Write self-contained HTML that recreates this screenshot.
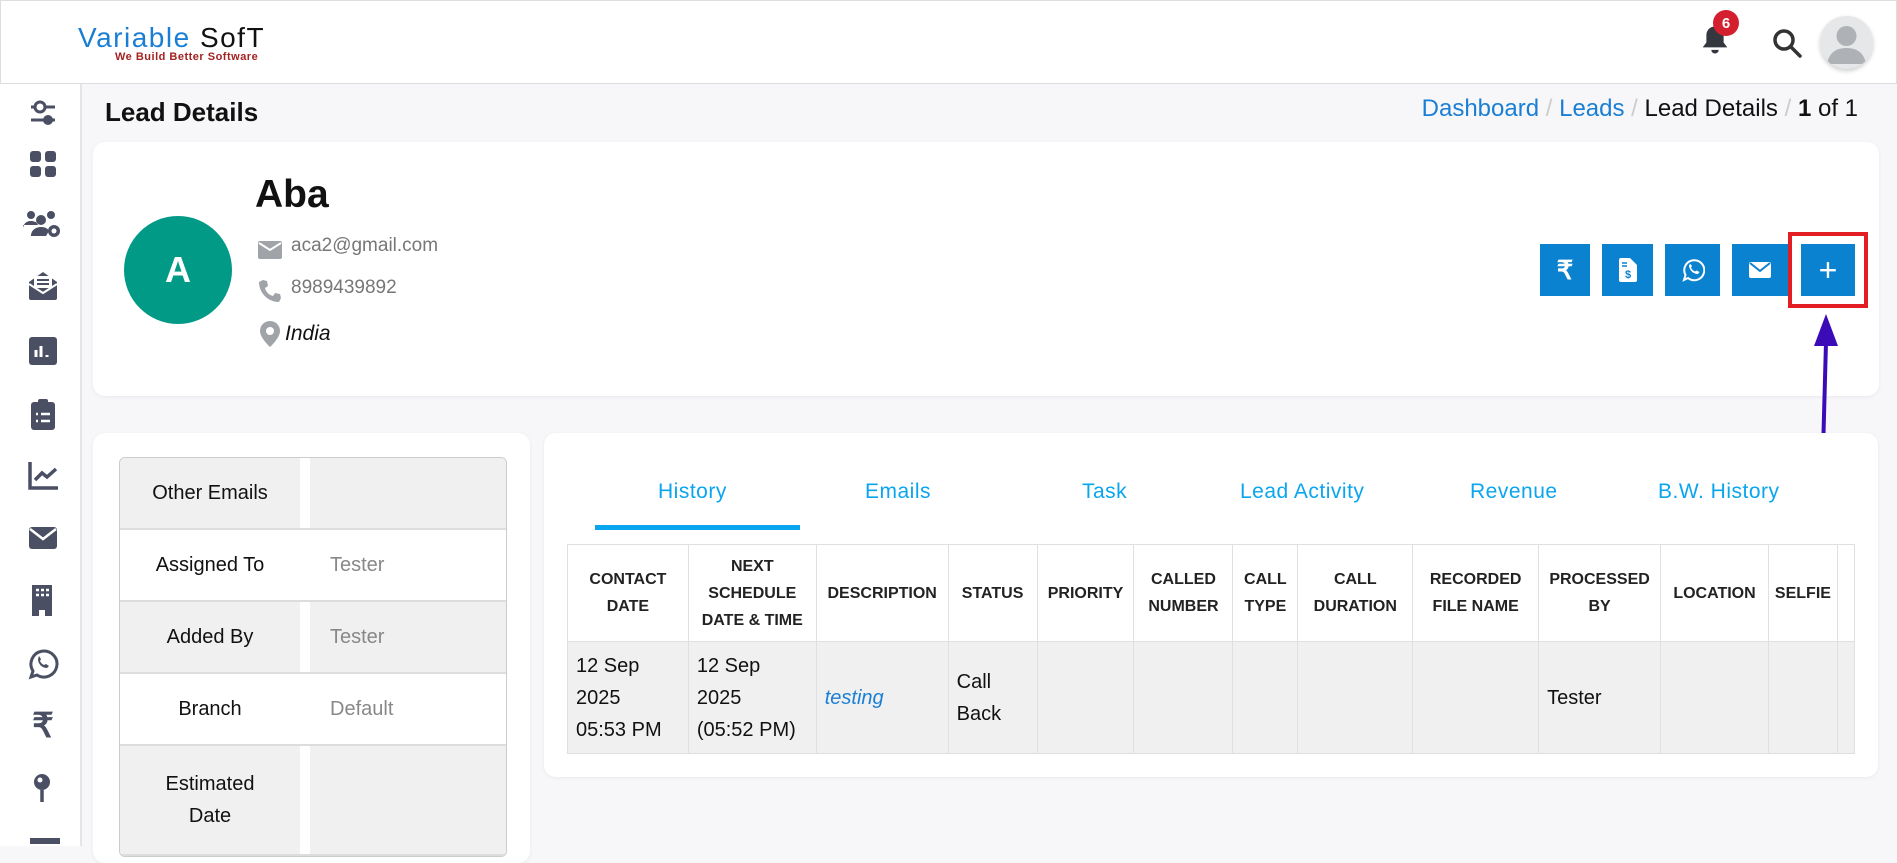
<!DOCTYPE html>
<html><head><meta charset="utf-8"><style>
*{box-sizing:border-box;margin:0;padding:0}
body{width:1897px;height:846px;overflow:hidden;background:#f7f7f9;font-family:"Liberation Sans",sans-serif;position:relative}
.abs{position:absolute}
.hdr{left:0;top:0;width:1897px;height:84px;background:#fff;border:1px solid #ddd}
.side{left:0;top:84px;width:82px;height:762px;background:#fff;border-right:2px solid #e5e5e5}
.ic{position:absolute;left:22px;width:42px;height:32px;display:flex;align-items:center;justify-content:center}
.card{background:#fff;border-radius:12px;box-shadow:0 1px 4px rgba(0,0,0,.06)}
.btn{position:absolute;top:244px;height:52px;background:#0b82cf;display:flex;align-items:center;justify-content:center;color:#fff}
.kv{position:absolute;left:119px;width:388px;border:1px solid #ccc;border-radius:6px;overflow:hidden}
.kv .r{display:flex;height:72px;border-bottom:2px solid #ddd}
.kv .k{width:190px;display:flex;align-items:center;justify-content:center;text-align:center;font-size:20px;color:#111;border-right:10px solid #fff;line-height:32px}
.kv .v{flex:1;display:flex;align-items:center;padding-left:20px;font-size:20px;color:#888}
.kv .g{background:#f0f0f0}
.tab{position:absolute;top:480px;font-size:21px;color:#0aa5ef;letter-spacing:.5px}
table{position:absolute;left:567px;top:544px;border-collapse:collapse;width:1288px}
th{font-size:16px;font-weight:bold;color:#222;height:97px;border:1px solid #dfe0e3;text-align:center;line-height:27px;padding:0 4px}
td{font-size:20px;color:#111;height:112px;background:#f0f0f0;border:1px solid #dfe0e3;line-height:32px;padding:0 8px;vertical-align:middle}
</style></head><body>
<div class="abs hdr"></div>
<div class="abs" style="left:78px;top:22px;font-size:28px;letter-spacing:1.5px;color:#1a7fd4">Variable <span style="color:#111">SofT</span></div>
<div class="abs" style="left:115px;top:51px;font-size:11px;letter-spacing:.5px;color:#a32222;font-weight:bold">We Build Better Software</div>
<!-- bell -->
<svg class="abs" style="left:1700px;top:24px" width="30" height="32" viewBox="0 0 24 26"><path d="M12 2c-4 0-7 3-7 7v6l-3 4h20l-3-4V9c0-4-3-7-7-7z" fill="#34373d"/><path d="M9 21a3 3 0 006 0z" fill="#34373d"/></svg>
<div class="abs" style="left:1713px;top:10px;width:26px;height:26px;border-radius:50%;background:#d41f2e;color:#fff;font-size:15px;font-weight:bold;display:flex;align-items:center;justify-content:center">6</div>
<svg class="abs" style="left:1771px;top:27px" width="32" height="32" viewBox="0 0 32 32"><circle cx="13" cy="13" r="9" fill="none" stroke="#333" stroke-width="3.5"/><path d="M20 20l9 9" stroke="#333" stroke-width="3.5" stroke-linecap="round"/></svg>
<div class="abs" style="left:1820px;top:16px;width:53px;height:53px;border-radius:50%;background:#e6e7e9;box-shadow:0 2px 5px rgba(0,0,0,.2);overflow:hidden"><svg width="53" height="53" viewBox="0 0 53 53"><circle cx="26.5" cy="20" r="10" fill="#aeb2b6"/><path d="M7 48c2-12 10-16 19.5-16S44 36 46 48z" fill="#aeb2b6"/></svg></div>

<div class="abs side">
<svg class="ic" style="top:14px" viewBox="0 0 42 32"><path d="M9 9h24M9 22h24" stroke="#4a4f63" stroke-width="3"/><circle cx="18" cy="9" r="5" fill="#fff" stroke="#4a4f63" stroke-width="3"/><circle cx="26" cy="22" r="5" fill="#4a4f63"/></svg>
<svg class="ic" style="top:64px" viewBox="0 0 42 32"><rect x="8" y="3" width="11" height="11" rx="3" fill="#4a4f63"/><rect x="23" y="3" width="11" height="11" rx="3" fill="#4a4f63"/><rect x="8" y="18" width="11" height="11" rx="3" fill="#4a4f63"/><rect x="23" y="18" width="11" height="11" rx="3" fill="#4a4f63"/></svg>
<svg class="ic" style="top:124px" viewBox="0 0 42 32"><circle cx="9" cy="7" r="4" fill="#4a4f63"/><circle cx="29" cy="7" r="4" fill="#4a4f63"/><circle cx="19" cy="12" r="5" fill="#4a4f63"/><path d="M1 20c1-6 5-7 8-7s6 1 7 4H1zM9 28c0-6 5-9 10-9s7 2 8 4l-3 5z" fill="#4a4f63"/><circle cx="32" cy="23" r="6" fill="#4a4f63"/><circle cx="32" cy="23" r="2.5" fill="#fff"/></svg>
<svg class="ic" style="top:186px" viewBox="0 0 42 32"><path d="M7 12l14-10 14 10v16a2 2 0 01-2 2H9a2 2 0 01-2-2z" fill="#4a4f63"/><rect x="12" y="6" width="18" height="12" fill="#fff"/><path d="M15 10h12M15 14h12" stroke="#4a4f63" stroke-width="2"/><path d="M7 14l14 9 14-9" stroke="#fff" stroke-width="2" fill="none"/></svg>
<svg class="ic" style="top:251px" viewBox="0 0 42 32"><rect x="7" y="2" width="28" height="28" rx="3" fill="#4a4f63"/><path d="M14 22v-7M19 22V11M25 22v-2" stroke="#fff" stroke-width="3"/></svg>
<svg class="ic" style="top:314px" viewBox="0 0 42 32"><rect x="9" y="4" width="24" height="28" rx="3" fill="#4a4f63"/><rect x="16" y="1" width="10" height="6" rx="2" fill="#4a4f63"/><path d="M14 16h2M19 16h9M14 23h2M19 23h9" stroke="#fff" stroke-width="2.5"/></svg>
<svg class="ic" style="top:375px" viewBox="0 0 42 32"><path d="M8 3v26h28" stroke="#4a4f63" stroke-width="3.5" fill="none"/><path d="M13 21l7-7 5 4 9-8" stroke="#4a4f63" stroke-width="3.5" fill="none"/></svg>
<svg class="ic" style="top:438px" viewBox="0 0 42 32"><rect x="7" y="5" width="28" height="22" rx="3" fill="#4a4f63"/><path d="M8 7l13 10 13-10" stroke="#fff" stroke-width="2.5" fill="none"/></svg>
<svg class="ic" style="top:500px" viewBox="0 0 42 32"><path d="M10 1h20v31h-7v-6h-6v6h-7z" fill="#4a4f63"/><path d="M14 6h3M19 6h3M24 6h3M14 11h3M19 11h3M24 11h3" stroke="#fff" stroke-width="2.5"/></svg>
<svg class="ic" style="top:564px" viewBox="0 0 42 32"><path d="M9 29l2-6a13 13 0 114 4z" fill="none" stroke="#4a4f63" stroke-width="3"/><path d="M16 11c0 5 4 9 9 9l2-2-3-2-2 1c-2-1-3-2-4-4l1-2-2-3z" fill="#4a4f63"/></svg>
<div class="ic" style="top:626px;font-size:34px;font-weight:bold;color:#4a4f63">₹</div>
<svg class="ic" style="top:688px" viewBox="0 0 42 32"><circle cx="20" cy="10" r="8" fill="#4a4f63"/><circle cx="18" cy="8" r="2.5" fill="#fff"/><path d="M20 18v12" stroke="#4a4f63" stroke-width="3.5"/></svg>
<div class="ic" style="top:752px;height:10px"><div style="width:30px;height:6px;background:#4a4f63;margin-left:4px"></div></div>
</div>

<div class="abs" style="left:105px;top:97px;font-size:26px;font-weight:bold;color:#111">Lead Details</div>
<div class="abs" style="right:39px;top:95px;font-size:24px;color:#111;white-space:nowrap"><span style="color:#1a7fd4">Dashboard</span> <span style="color:#ccc">/</span> <span style="color:#1a7fd4">Leads</span> <span style="color:#ccc">/</span> Lead Details <span style="color:#ccc">/</span> <b>1</b> of 1</div>

<div class="abs card" style="left:93px;top:142px;width:1786px;height:254px"></div>
<div class="abs" style="left:124px;top:216px;width:108px;height:108px;border-radius:50%;background:#019a86;color:#fff;font-size:36px;font-weight:bold;display:flex;align-items:center;justify-content:center">A</div>
<div class="abs" style="left:255px;top:173px;font-size:39px;font-weight:bold;color:#111">Aba</div>
<svg class="abs" style="left:258px;top:241px" width="24" height="18" viewBox="0 0 24 18"><rect width="24" height="18" rx="2" fill="#a0a3a8"/><path d="M1 2l11 7 11-7" stroke="#fff" stroke-width="2" fill="none"/></svg>
<div class="abs" style="left:291px;top:235px;font-size:19px;color:#777">aca2@gmail.com</div>
<svg class="abs" style="left:258px;top:279px" width="24" height="24" viewBox="0 0 24 24"><path d="M5 1l4 1 1 5-3 2c1 4 4 7 8 8l2-3 5 1 1 4-2 4C10 23 1 14 1 3z" fill="#a0a3a8"/></svg>
<div class="abs" style="left:291px;top:277px;font-size:19px;color:#777">8989439892</div>
<svg class="abs" style="left:259px;top:321px" width="22" height="26" viewBox="0 0 22 26"><path d="M11 0a10 10 0 00-10 10c0 7 10 16 10 16s10-9 10-16A10 10 0 0011 0z" fill="#a0a3a8"/><circle cx="11" cy="10" r="4" fill="#fff"/></svg>
<div class="abs" style="left:285px;top:322px;font-size:21px;font-style:italic;color:#111">India</div>

<div class="btn" style="left:1540px;width:50px;font-size:26px;font-weight:bold">₹</div>
<div class="btn" style="left:1602px;width:51px"><svg width="18" height="24" viewBox="0 0 18 24"><path d="M2 0h9l7 7v15a2 2 0 01-2 2H2a2 2 0 01-2-2V2a2 2 0 012-2z" fill="#fff"/><text x="9" y="20" font-size="11" font-weight="bold" text-anchor="middle" fill="#0b82cf" font-family="Liberation Sans">$</text><path d="M3 5h5M3 8h5" stroke="#0b82cf" stroke-width="1.5"/></svg></div>
<div class="btn" style="left:1665px;width:55px"><svg width="24" height="24" viewBox="0 0 24 24"><path d="M3 22l1.5-5A10 10 0 117 20z" fill="none" stroke="#fff" stroke-width="2"/><path d="M8 7c0 5 4 9 9 9l1.5-2-3-1.5-1.5 1c-2-1-3-2-4-4l1-1.5L9.5 6z" fill="#fff"/></svg></div>
<div class="btn" style="left:1732px;width:56px"><svg width="22" height="16" viewBox="0 0 22 16"><rect width="22" height="16" rx="2" fill="#fff"/><path d="M1 1l10 8 10-8" stroke="#0b82cf" stroke-width="2" fill="none"/></svg></div>
<div class="abs" style="left:1788px;top:232px;width:80px;height:76px;border:4px solid #e21d24"></div>
<div class="btn" style="left:1801px;width:54px;font-size:32px">+</div>
<svg class="abs" style="left:1800px;top:312px" width="50" height="220" viewBox="0 0 50 220"><path d="M21 214L26 30" stroke="#3b0bb8" stroke-width="4"/><path d="M26 2L14 34h24z" fill="#3b0bb8"/></svg>

<div class="abs card" style="left:93px;top:433px;width:437px;height:430px"></div>
<div class="kv" style="top:457px">
<div class="r g"><div class="k">Other Emails</div><div class="v"></div></div>
<div class="r"><div class="k">Assigned To</div><div class="v">Tester</div></div>
<div class="r g"><div class="k">Added By</div><div class="v">Tester</div></div>
<div class="r"><div class="k">Branch</div><div class="v">Default</div></div>
<div class="r g" style="height:110px"><div class="k">Estimated<br>Date</div><div class="v"></div></div>
</div>

<div class="abs card" style="left:544px;top:433px;width:1334px;height:344px"></div>
<div class="tab" style="left:658px">History</div>
<div class="tab" style="left:865px">Emails</div>
<div class="tab" style="left:1082px">Task</div>
<div class="tab" style="left:1240px">Lead Activity</div>
<div class="tab" style="left:1470px">Revenue</div>
<div class="tab" style="left:1658px">B.W. History</div>
<div class="abs" style="left:595px;top:525px;width:205px;height:5px;background:#0aa5ef"></div>
<table>
<tr><th style="width:121px">CONTACT<br>DATE</th><th style="width:128px">NEXT<br>SCHEDULE<br>DATE &amp; TIME</th><th style="width:132px">DESCRIPTION</th><th style="width:89px">STATUS</th><th style="width:97px">PRIORITY</th><th style="width:99px">CALLED<br>NUMBER</th><th style="width:65px">CALL<br>TYPE</th><th style="width:115px">CALL<br>DURATION</th><th style="width:126px">RECORDED<br>FILE NAME</th><th style="width:122px">PROCESSED<br>BY</th><th style="width:108px">LOCATION</th><th style="width:69px">SELFIE</th><th style="width:16px"></th></tr>
<tr><td>12 Sep<br>2025<br>05:53 PM</td><td>12 Sep<br>2025<br>(05:52 PM)</td><td style="color:#1a7fd4;font-style:italic">testing</td><td>Call<br>Back</td><td></td><td></td><td></td><td></td><td></td><td>Tester</td><td></td><td></td><td></td></tr>
</table>
</body></html>
